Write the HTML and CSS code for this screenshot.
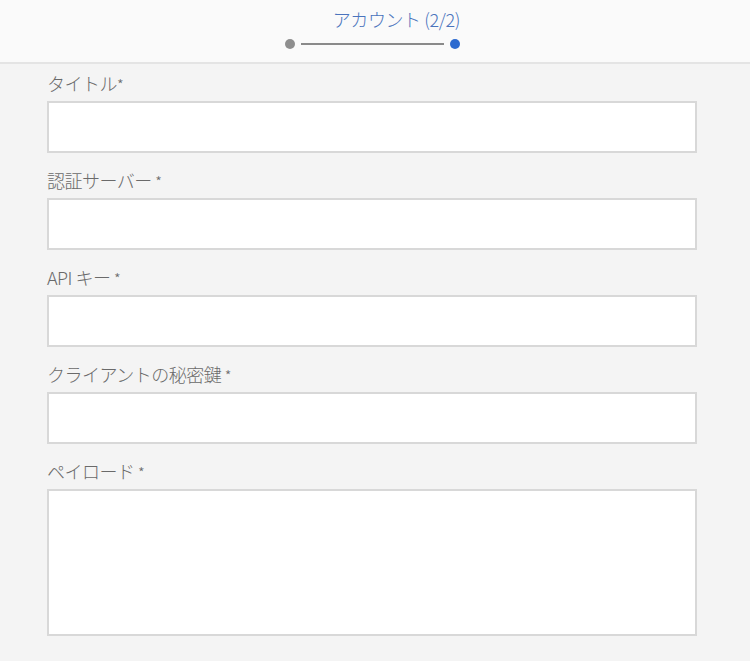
FILE: index.html
```html
<!DOCTYPE html>
<html lang="ja">
<head>
<meta charset="utf-8">
<link rel="stylesheet" href="styles.css">
</head>
<body>
<header class="header">
  <div class="stepper">
    <div class="step-title">アカウント (2/2)</div>
    <div class="step-track">
      <span class="dot dot-done"></span>
      <span class="track-line"></span>
      <span class="dot dot-current"></span>
    </div>
  </div>
</header>
<main class="form">
  <div class="field">
    <label class="label">タイトル<span class="req">*</span></label>
    <input class="input" type="text">
  </div>
  <div class="field">
    <label class="label">認証サーバー <span class="req">*</span></label>
    <input class="input" type="text">
  </div>
  <div class="field">
    <label class="label">API キー <span class="req">*</span></label>
    <input class="input" type="text">
  </div>
  <div class="field">
    <label class="label">クライアントの秘密鍵 <span class="req">*</span></label>
    <input class="input" type="text">
  </div>
  <div class="field">
    <label class="label">ペイロード <span class="req">*</span></label>
    <textarea class="input textarea"></textarea>
  </div>
</main>
</body>
</html>
```

FILE: styles.css
```css
html, body {
  margin: 0;
  padding: 0;
  background: #f4f4f4;
  font-family: "Open Sans", "Noto Sans CJK JP", sans-serif;
}
.header {
  height: 62px;
  background: #fafafa;
  border-bottom: 2px solid #e4e4e4;
  display: flex;
}
.stepper {
  margin-left: 285px;
  width: 175px;
  display: flex;
  flex-direction: column;
  align-items: flex-end;
}
.step-title {
  margin-top: 7px;
  height: 24px;
  font-size: 18px;
  line-height: 24px;
  color: #4a74bd;
  font-family: "Noto Sans CJK JP", sans-serif;
  font-weight: 300;
  letter-spacing: -0.4px;
}
.step-track {
  margin-top: 8px;
  display: flex;
  align-items: center;
  width: 175px;
}
.dot {
  width: 10px;
  height: 10px;
  border-radius: 50%;
  flex: none;
}
.dot-done { background: #8e8e8e; }
.dot-current { background: #2d6bd0; }
.track-line {
  flex: 1;
  height: 2px;
  margin: 0 6px;
  background: #8a8a8a;
}
.form {
  padding: 7px 0 0 47px;
  width: 650px;
}
.field {
  display: flex;
  flex-direction: column;
  margin-bottom: 15px;
}
.label {
  display: block;
  height: 24px;
  font-family: "Noto Sans CJK JP", sans-serif;
  font-size: 18px;
  font-weight: 300;
  line-height: 24px;
  color: #6a6a6a;
  margin-bottom: 6px;
  letter-spacing: -0.5px;
}
.req {
  font-size: 15px;
  line-height: 1;
}
.input {
  box-sizing: border-box;
  width: 650px;
  height: 52px;
  margin: 0;
  background: #ffffff;
  border: 2px solid #d8d8d8;
  border-radius: 0;
  outline: none;
  font: inherit;
}
.textarea {
  height: 147px;
  resize: none;
  display: block;
}
```
